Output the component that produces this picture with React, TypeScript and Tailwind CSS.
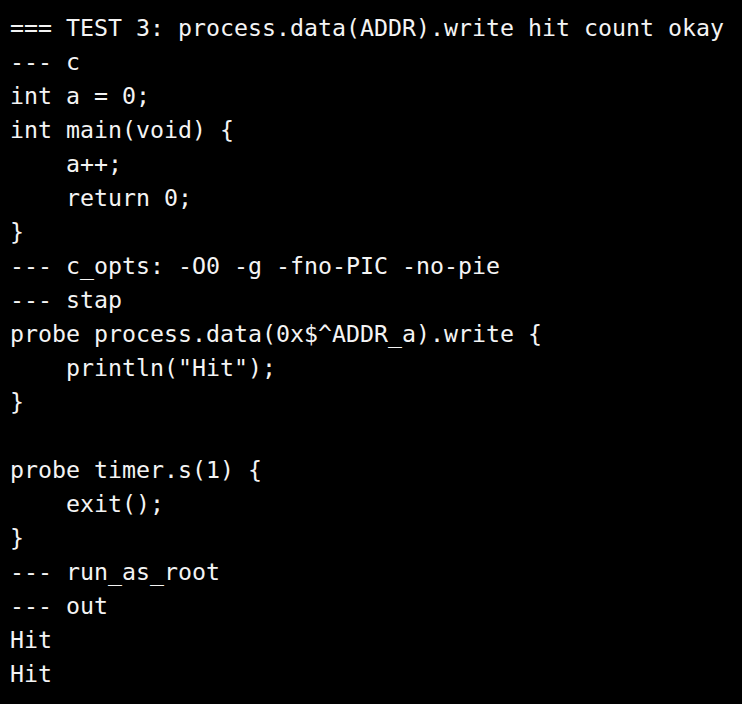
const lines = [
  "=== TEST 3: process.data(ADDR).write hit count okay",
  "--- c",
  "int a = 0;",
  "int main(void) {",
  "    a++;",
  "    return 0;",
  "}",
  "--- c_opts: -O0 -g -fno-PIC -no-pie",
  "--- stap",
  "probe process.data(0x$^ADDR_a).write {",
  '    println("Hit");',
  "}",
  "",
  "probe timer.s(1) {",
  "    exit();",
  "}",
  "--- run_as_root",
  "--- out",
  "Hit",
  "Hit",
];

export default function App() {
  return (
    <main className="min-h-screen w-full bg-black pl-[10px] pt-[11px] text-[#f4f4f4]">
      <pre className="m-0 font-['DejaVu_Sans_Mono',monospace] text-[23.25px] leading-[34px]">
        {lines.map((line, i) => (
          <div key={i} className="h-[34px] whitespace-pre">
            {line}
          </div>
        ))}
      </pre>
    </main>
  );
}
